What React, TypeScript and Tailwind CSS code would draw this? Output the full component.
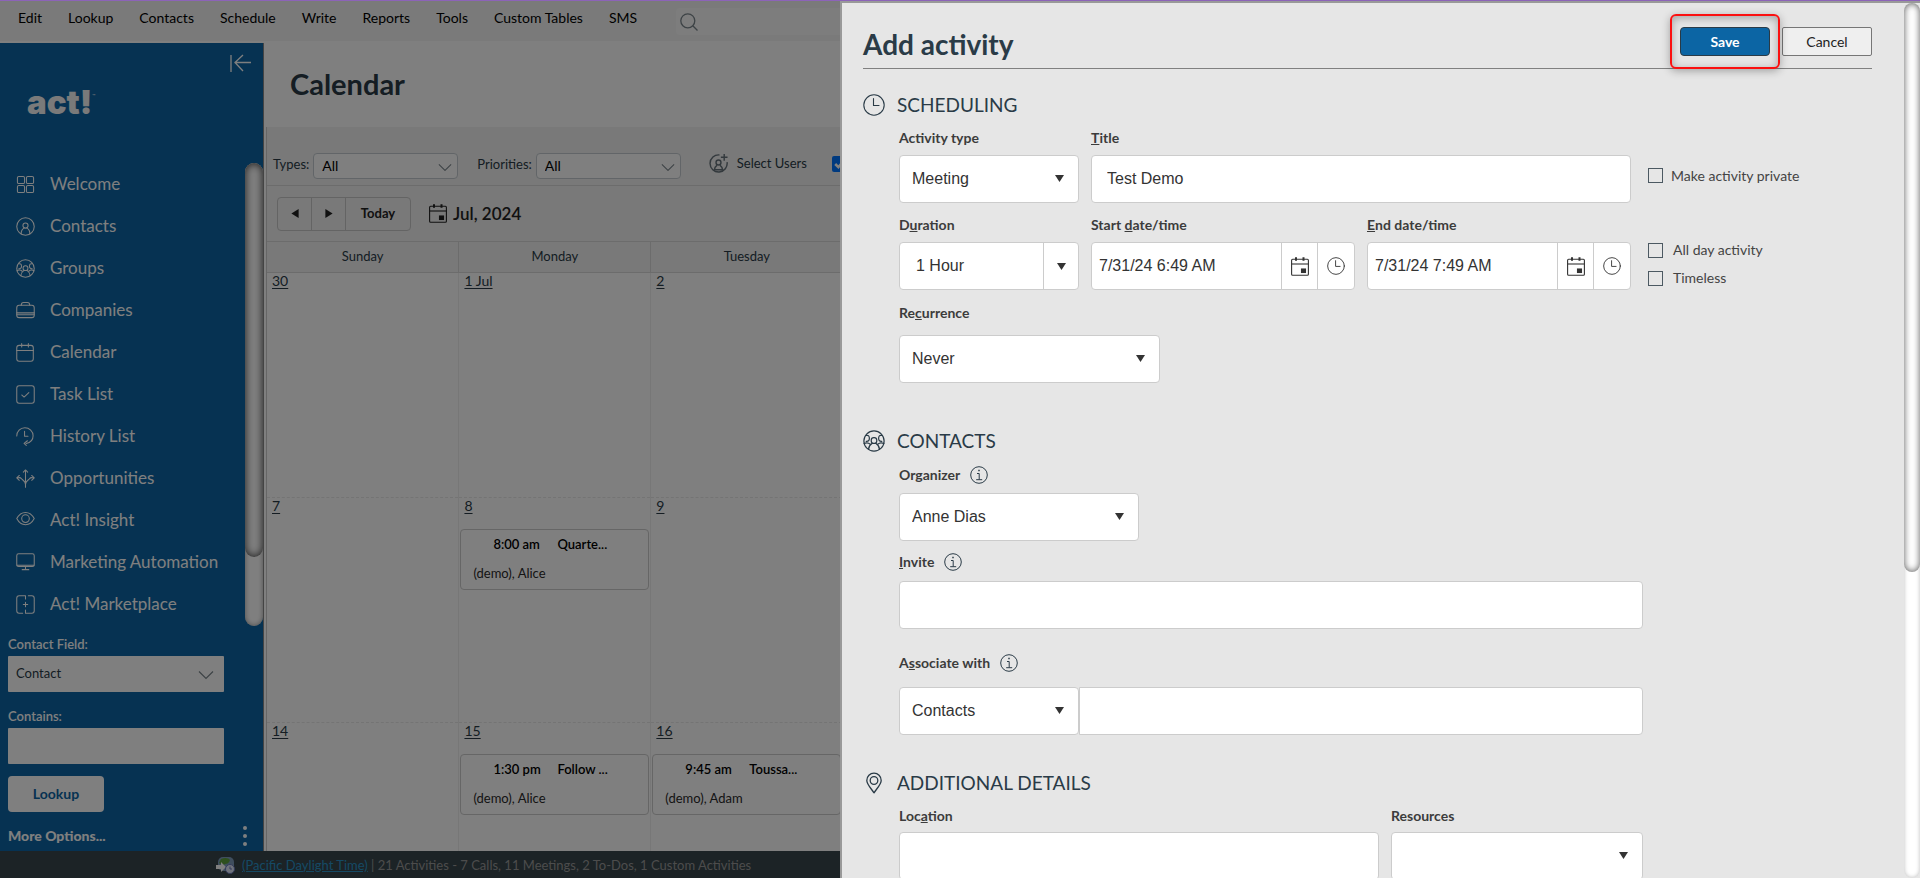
import React from "react";

type IconProps = { className?: string };

const stroke = {
  fill: "none",
  stroke: "currentColor",
  strokeWidth: 1.1,
  strokeLinecap: "round" as const,
  strokeLinejoin: "round" as const,
};

const WelcomeIcon = ({ className }: IconProps) => (
  <svg viewBox="0 0 20 20" className={className} {...stroke}>
    <rect x="1.5" y="1.5" width="7.5" height="7.5" rx="1.5" />
    <rect x="11" y="1.5" width="7.5" height="7.5" rx="1.5" />
    <rect x="1.5" y="11" width="7.5" height="7.5" rx="1.5" />
    <rect x="11" y="11" width="7.5" height="7.5" rx="1.5" />
  </svg>
);

const PersonIcon = ({ className }: IconProps) => (
  <svg viewBox="0 0 20 20" className={className} {...stroke}>
    <circle cx="10" cy="10" r="9.2" />
    <circle cx="10" cy="9" r="2.7" />
    <path d="M5.4 17.8c0-3.600 1.400-5.200 3.200-6.300M14.600 17.800c0-3.600-1.400-5.200-3.200-6.300" />
  </svg>
);

const GroupIcon = ({ className }: IconProps) => (
  <svg viewBox="0 0 20 20" className={className} {...stroke}>
    <circle cx="10" cy="10" r="9.2" />
    <rect x="7.500" y="7" width="5" height="5.200" rx="2.300" />
    <path d="M5 17.600c.2-2.600 1.400-4.300 3.400-5.600M15 17.600c-.2-2.600-1.400-4.300-3.400-5.600" />
    <path d="M3.200 5c1.600-.4 2.600.6 2.600 2.500 0 2-1 3-2.900 2.800M1 12.300c2-1 3.800-1 5.600.6" />
    <path d="M16.800 5c-1.600-.4-2.600.6-2.600 2.500 0 2 1 3 2.900 2.800M19 12.300c-2-1-3.800-1-5.600.6" />
  </svg>
);

const BriefcaseIcon = ({ className }: IconProps) => (
  <svg viewBox="0 0 20 20" className={className} {...stroke}>
    <rect x="0.8" y="4.5" width="18.4" height="13" rx="2.5" />
    <path d="M5.5 4.5c0-2 .8-3 2.5-3h4c1.700 0 2.500 1 2.500 3M.8 12.500h18.400M.8 14.500h18.400" />
  </svg>
);

const CalIcon = ({ className }: IconProps) => (
  <svg viewBox="0 0 20 20" className={className} {...stroke}>
    <rect x="0.800" y="2.500" width="17.400" height="16.700" rx="2.500" />
    <path d="M.8 8h17.400M6 .6v3.600M13 .6v3.600" />
  </svg>
);

const TaskIcon = ({ className }: IconProps) => (
  <svg viewBox="0 0 20 20" className={className} {...stroke}>
    <rect x="0.800" y="0.800" width="18.400" height="18.400" rx="2.500" />
    <path d="M6 10.500l2.500 2.200L13.500 8" />
  </svg>
);

const HistoryIcon = ({ className }: IconProps) => (
  <svg viewBox="0 0 20 20" className={className} {...stroke}>
    <path d="M.8 9.500C.8 4.500 4.500.8 9.300.8s8.700 3.700 8.700 8.400c0 4-2.800 7.200-7.300 8.200M9 4.500v5.200h3.600M12 14.500l-3.500 2.700 2.300 2.200" />
  </svg>
);

const OpportunityIcon = ({ className }: IconProps) => (
  <svg viewBox="0 0 20 20" className={className} {...stroke}>
    <path d="M10 19.200V1M7.700 3.300L10 1l2.300 2.300M3.500 6.800L.8 9.300l2.700 2.600M16.500 6.800l2.700 2.500-2.700 2.600M.8 9.300c3 0 3.500-1 5 1 1.500 2 4.200 2 4.200 6M19.200 9.300c-3 0-3.500-1-5 1-1.500 2-4.200 2-4.200 6" />
  </svg>
);

const EyeIcon = ({ className }: IconProps) => (
  <svg viewBox="0 0 20 20" className={className} {...stroke}>
    <path d="M.8 8C3 3.800 6 1.500 10 1.500S17 3.800 19.200 8c-2.200 4.200-5.200 6.500-9.200 6.500S3 12.200.8 8z" />
    <circle cx="10" cy="8" r="4" />
  </svg>
);

const MonitorIcon = ({ className }: IconProps) => (
  <svg viewBox="0 0 20 20" className={className} {...stroke}>
    <rect x="0.800" y="0.800" width="18.400" height="13.500" rx="2" />
    <path d="M1 13h18M10 14.500v3M6.500 17.500h7" />
  </svg>
);

const MarketIcon = ({ className }: IconProps) => (
  <svg viewBox="0 0 20 20" className={className} {...stroke}>
    <path d="M7 .8H3.300A2.500 2.500 0 0 0 .8 3.300v13.400a2.500 2.500 0 0 0 2.500 2.500H7M10 .8v3.500M10 15.700v3.500M13 .8h3.700a2.500 2.500 0 0 1 2.500 2.500v13.400a2.500 2.500 0 0 1-2.500 2.500H10M7 .8h3M7.700 10h4.600M10 7.700v4.600" />
  </svg>
);

const ClockIcon = ({ className }: IconProps) => (
  <svg viewBox="0 0 22 22" className={className} {...stroke}>
    <circle cx="11" cy="11" r="10.200" />
    <path d="M10.500 4.500v7h5.500" />
  </svg>
);

const DateIcon = ({ className }: IconProps) => (
  <svg viewBox="0 0 18 19" className={className} fill="none" stroke="currentColor" strokeWidth="1.100">
    <rect x="0.600" y="2.200" width="16.800" height="16" rx="1" />
    <path d="M.6 7h16.800" />
    <path d="M5 .3v3.500M12.500.3v3.500" strokeWidth="2" />
    <rect x="10.500" y="12" width="4" height="3.500" fill="currentColor" />
  </svg>
);

const InfoIcon = ({ className }: IconProps) => (
  <svg viewBox="0 0 18 18" className={className} fill="none" stroke="currentColor">
    <circle cx="9" cy="9" r="8.300" />
    <path d="M7 7.500h2.200v6M6.200 13.700h6" />
    <path d="M9 3.800v1.500" strokeWidth="1.500" />
  </svg>
);

const PinIcon = ({ className }: IconProps) => (
  <svg viewBox="0 0 22 22" className={className} {...stroke} strokeWidth="1.300">
    <path d="M11 20.800C8.500 17 3.800 12.300 3.800 8.500 3.800 4.300 7 1.200 11 1.200s7.200 3.100 7.200 7.300c0 3.800-4.700 8.500-7.200 12.300z" />
    <circle cx="11" cy="8.500" r="3.800" />
  </svg>
);

const Chevron = ({ className }: IconProps) => (
  <svg viewBox="0 0 16 10" className={className} fill="none" stroke="currentColor" strokeWidth="1.200">
    <path d="M1 1.500l7 7 7-7" />
  </svg>
);

const menu = ["Edit", "Lookup", "Contacts", "Schedule", "Write", "Reports", "Tools", "Custom Tables", "SMS"];

const nav = [
  { label: "Welcome", Icon: WelcomeIcon },
  { label: "Contacts", Icon: PersonIcon },
  { label: "Groups", Icon: GroupIcon },
  { label: "Companies", Icon: BriefcaseIcon },
  { label: "Calendar", Icon: CalIcon },
  { label: "Task List", Icon: TaskIcon },
  { label: "History List", Icon: HistoryIcon },
  { label: "Opportunities", Icon: OpportunityIcon },
  { label: "Act! Insight", Icon: EyeIcon },
  { label: "Marketing Automation", Icon: MonitorIcon },
  { label: "Act! Marketplace", Icon: MarketIcon },
];

const weekdays = ["Sunday", "Monday", "Tuesday", "Wednesday", "Thursday", "Friday", "Saturday"];

type CalEvent = { time: string; title: string; who: string };

const weeks: { day: string; event?: CalEvent }[][] = [
  [{ day: "30" }, { day: "1 Jul" }, { day: "2" }, { day: "3" }, { day: "4" }, { day: "5" }, { day: "6" }],
  [
    { day: "7" },
    { day: "8", event: { time: "8:00 am", title: "Quarte...", who: "(demo), Alice" } },
    { day: "9" },
    { day: "10" },
    { day: "11" },
    { day: "12" },
    { day: "13" },
  ],
  [
    { day: "14" },
    { day: "15", event: { time: "1:30 pm", title: "Follow ...", who: "(demo), Alice" } },
    { day: "16", event: { time: "9:45 am", title: "Toussa...", who: "(demo), Adam" } },
    { day: "17" },
    { day: "18" },
    { day: "19" },
    { day: "20" },
  ],
];

const TopMenu = () => (
  <header className="flex h-[43px] shrink-0 items-start border-b-2 border-white bg-[#f4f4f4] pl-[18px] text-sm text-black">
    <nav className="flex gap-[26px] pt-2">
      {menu.map((item) => (
        <a key={item} href="#" className="whitespace-nowrap leading-5">
          {item}
        </a>
      ))}
    </nav>
    <label className="ml-[39px] mt-2 flex h-[27px] w-[330px] items-center rounded bg-[#fafafa] pl-1">
      <svg viewBox="0 0 18 18" className="size-[18px] text-[#7b868c]" fill="none" stroke="currentColor" strokeWidth="1.300">
        <circle cx="7.800" cy="7.800" r="7" />
        <path d="M12.800 12.800l4.700 4.700" />
      </svg>
      <input aria-label="Search" className="min-w-0 flex-1 outline-none" />
    </label>
  </header>
);

const Sidebar = () => (
  <aside className="flex w-[264px] shrink-0 flex-col border-r border-[#888] bg-[#0c65a4] text-white">
    <div className="flex justify-end pr-3 pt-[11px]">
      <button aria-label="Collapse menu">
        <svg viewBox="0 0 21 18" className="h-[18px] w-[21px]" fill="none" stroke="currentColor" strokeWidth="1.300">
          <path d="M1 1v17M21 8.500H4.500M13 1L5 8.500l8 8.500" />
        </svg>
      </button>
    </div>
    <div className="flex h-[89px] items-start pl-[27px] pt-[10px] font-[Inter] text-[#f4f4f4]">
      <span className="text-[33px] leading-[40px] font-black">act!</span>
      <span className="pt-2 text-[5px] leading-3">™</span>
    </div>
    <div className="flex">
      <nav className="flex flex-1 flex-col pt-[2px]">
        {nav.map(({ label, Icon }) => (
          <a key={label} href="#" className="flex h-[42px] items-center gap-[15px] pl-4 text-[17px]">
            <Icon className="size-[19px]" />
            {label}
          </a>
        ))}
      </nav>
      <div className="mb-[-1px] mt-[2px] w-[18px] rounded-full bg-white shadow-[inset_0_0_5px_#999]">
        <div className="h-[85%] rounded-full bg-white shadow-[inset_0_0_8px_#333]" />
      </div>
    </div>
    <form className="flex flex-col items-start pl-2 pt-[9px] text-[13px]">
      <label htmlFor="field" className="leading-5 font-semibold">
        Contact Field:
      </label>
      <div className="relative mt-[2px] w-[216px]">
        <select id="field" className="h-9 w-full appearance-none rounded-[1px] bg-white px-2 text-[#2a3b47]">
          <option>Contact</option>
        </select>
        <Chevron className="pointer-events-none absolute right-[10px] top-[14px] w-4 text-[#7b868c]" />
      </div>
      <label htmlFor="contains" className="mt-[14px] leading-5 font-semibold">
        Contains:
      </label>
      <input id="contains" className="mt-[2px] h-9 w-[216px] rounded-[1px] bg-white px-2 text-black" />
      <button type="button" className="mt-3 h-9 w-24 rounded bg-white text-sm font-bold text-[#0c65a4]">
        Lookup
      </button>
    </form>
    <div className="flex items-center justify-between pl-2 pr-4 pt-[14px]">
      <a href="#" className="text-sm font-black">
        More Options...
      </a>
      <button aria-label="More" className="flex flex-col gap-1">
        <span className="size-1 rounded-full bg-white" />
        <span className="size-1 rounded-full bg-white" />
        <span className="size-1 rounded-full bg-white" />
      </button>
    </div>
  </aside>
);

const FilterSelect = ({ label }: { label: string }) => (
  <label className="flex items-center gap-1">
    <span className="leading-5">{label}</span>
    <span className="relative mt-1 w-[145px]">
      <select className="h-[26px] w-full appearance-none rounded border border-[#c4cbd0] bg-white pl-2 text-sm text-black">
        <option>All</option>
      </select>
      <Chevron className="pointer-events-none absolute right-[6px] top-[10px] w-[14px] text-[#7b868c]" />
    </span>
  </label>
);

const CalendarPage = () => (
  <main className="min-w-0 flex-1 overflow-hidden bg-white pl-[2px] text-[13px] text-[#2a3b47]">
    <h1 className="flex h-[84px] items-center pb-[2px] pl-6 text-[29px] font-bold">Calendar</h1>
    <div className="border-l border-[#ccc] bg-[#f2f2f2] pr-[309px]">
      <div className="flex h-[59px] items-center gap-[19px] border-b border-[#d8d8d8] pl-[6px] pt-[15px]">
        <FilterSelect label="Types:" />
        <FilterSelect label="Priorities:" />
        <button className="ml-[9px] flex items-center gap-[9px]">
          <svg viewBox="0 0 20 20" className="size-[19px] text-[#66727a]" fill="none" stroke="currentColor" strokeWidth="1.500">
            <path d="M11 1A9 9 0 1 0 19 8.500M16 0v7M12.500 3.500h7" />
            <circle cx="10" cy="9" r="2.600" />
            <path d="M5.500 17.500c.3-3.200 1.500-4.800 3-5.800M14.500 17.500c-.3-3.200-1.500-4.800-3-5.800M6 16.500h8" />
          </svg>
          Select Users
        </button>
        <label className="ml-[6px] flex items-center gap-2">
          <input type="checkbox" defaultChecked className="size-4 accent-[#0075ff]" />
          Show Cleared
        </label>
      </div>
      <div className="flex h-14 items-center border-b border-[#d8d8d8] pl-[10px]">
        <div className="flex h-[34px] divide-x divide-[#c8c8c8] rounded border border-[#c8c8c8] font-bold text-[#222]">
          <button aria-label="Previous" className="w-[34px]">
            <svg viewBox="0 0 8 10" className="mx-auto h-[9px] w-2" fill="currentColor">
              <path d="M8 0v10L0 5z" />
            </svg>
          </button>
          <button aria-label="Next" className="w-[34px]">
            <svg viewBox="0 0 8 10" className="mx-auto h-[9px] w-2" fill="currentColor">
              <path d="M0 0v10l8-5z" />
            </svg>
          </button>
          <button className="w-16">Today</button>
        </div>
        <DateIcon className="ml-[18px] h-[19px] w-[18px] text-[#222]" />
        <span className="ml-[6px] text-[17px] font-semibold text-[#222]">Jul, 2024</span>
      </div>
      <table className="w-full table-fixed border-collapse">
        <thead>
          <tr className="h-[30px]">
            {weekdays.map((d) => (
              <th key={d} className="border-r border-b border-[#d8d8d8] font-normal">
                {d}
              </th>
            ))}
          </tr>
        </thead>
        <tbody className="bg-white">
          {weeks.map((week, i) => (
            <tr key={i} className="h-[225px] border-b border-dashed border-[#e8e8e8]">
              {week.map(({ day, event }) => (
                <td key={day} className="border-r border-[#eee] px-[1px] align-top">
                  <a href="#" className="block pl-1 text-sm leading-4 underline underline-offset-2">
                    {day}
                  </a>
                  {event && (
                    <div className="mt-[15px] h-[61px] rounded border border-[#ccc] pl-3 leading-[29px] text-black">
                      <div className="flex pl-5">
                        <span className="w-16 font-semibold">{event.time}</span>
                        <span className="font-semibold">{event.title}</span>
                      </div>
                      <div className="text-[#2a2a2a]">{event.who}</div>
                    </div>
                  )}
                </td>
              ))}
            </tr>
          ))}
        </tbody>
      </table>
    </div>
  </main>
);

const StatusBar = () => (
  <footer className="flex h-[27px] shrink-0 items-center gap-[7px] bg-[#38464c] pl-[216px] pt-[2px] text-[13px] text-[#999]">
    <svg viewBox="0 0 19 17" className="h-[17px] w-[19px]">
      <rect x="2" width="16" height="14" rx="5" fill="#7e9cbc" />
      <path d="M5 2c4-2 8-1 9 1-1 3-3 4-5 4-2 2-4 0-6-1z" fill="#5ca03c" />
      <path d="M0 8h5V5l5 5-5 5v-3H0z" fill="#fff" />
      <circle cx="14" cy="12" r="4.500" fill="#dfe6f8" stroke="#6878b8" />
      <path d="M14 9.500V12h2" stroke="#6878b8" fill="none" />
    </svg>
    <span>
      <a href="#" className="text-[#2a93c9] underline">
        (Pacific Daylight Time)
      </a>{" "}
      | 21 Activities - 7 Calls, 11 Meetings, 2 To-Dos, 1 Custom Activities
    </span>
  </footer>
);

const Arrow = ({ className = "right-[15px]" }: IconProps) => (
  <svg viewBox="0 0 9 7" className={`pointer-events-none absolute top-5 h-[7px] w-[9px] text-[#333] ${className}`} fill="currentColor">
    <path d="M0 0h9L4.500 7z" />
  </svg>
);

const box = "h-12 rounded border border-[#ccc] bg-white font-['Liberation_Sans',Arial,sans-serif] text-base text-[#333]";
const labelText = "flex items-center text-sm leading-5 font-bold text-[#3c3c3c]";

const SelectBox = ({ id, value, className }: { id: string; value: string; className: string }) => (
  <div className={`relative ${className}`}>
    <select id={id} className={`${box} w-full appearance-none pl-3`}>
      <option>{value}</option>
    </select>
    <Arrow />
  </div>
);

const DateBox = ({ id, value }: { id: string; value: string }) => (
  <div className={`${box} flex divide-x divide-[#ccc]`}>
    <input id={id} defaultValue={value} className="min-w-0 flex-1 pl-[7px] outline-none" />
    <button aria-label="Pick a date" className="flex w-9 items-center justify-center">
      <DateIcon className="h-[19px] w-[18px]" />
    </button>
    <button aria-label="Pick a time" className="flex w-9 items-center justify-center">
      <ClockIcon className="size-[18px]" />
    </button>
  </div>
);

const CheckBox = ({ label, className }: { label: string; className: string }) => (
  <label className={`flex items-center text-sm leading-5 text-[#444] ${className}`}>
    <input type="checkbox" className="size-[15px] appearance-none border border-[#4c5962]" />
    {label}
  </label>
);

const SectionTitle = ({ icon, children }: { icon: React.ReactNode; children: React.ReactNode }) => (
  <h3 className="flex h-8 items-center gap-3 text-[19px] text-[#2a3b47]">
    {icon}
    {children}
  </h3>
);

const AddActivity = () => (
  <section
    role="dialog"
    aria-label="Add activity"
    className="fixed bottom-0 right-0 top-px flex w-9/16 overflow-hidden border-l-2 border-t-2 border-[#999] bg-[#e6e6e6]"
  >
    <div className="min-w-0 flex-1 pl-[21px] pr-8">
      <div className="flex items-start justify-between border-b border-[#808080] pb-[7px] pt-6">
        <h2 className="text-[28px] leading-[34px] font-bold text-[#2a3b47]">Add activity</h2>
        <div className="flex gap-3 text-sm">
          <div className="relative">
            <button className="h-[29px] w-[90px] rounded border border-[#2a3b47] bg-[#0c65a4] font-bold text-white">Save</button>
            <div className="pointer-events-none absolute -inset-x-[10px] -bottom-[13px] -top-[13px] rounded-md border-2 border-[#fb1010] shadow-[0_2px_8px_rgba(0,0,0,0.3),inset_0_2px_8px_rgba(0,0,0,0.3)]" />
          </div>
          <button className="h-[29px] w-[90px] rounded-xs border border-[#767676] bg-[#efefef] text-[#222]">Cancel</button>
        </div>
      </div>

      <div className="mt-5">
        <SectionTitle icon={<ClockIcon className="size-[22px]" />}>SCHEDULING</SectionTitle>
        <div className="mt-[7px] grid grid-cols-[180px_264px_264px_1fr] gap-x-3 pl-9">
          <label htmlFor="type" className={labelText}>
            Activity type
          </label>
          <label htmlFor="title" className={`${labelText} col-span-3`}>
            <u>T</u>itle
          </label>
          <SelectBox id="type" value="Meeting" className="mt-[7px]" />
          <input id="title" defaultValue="Test Demo" className={`${box} col-span-2 mt-[7px] px-[15px]`} />
          <CheckBox label="Make activity private" className="gap-2 pl-[5px]" />

          <label htmlFor="duration" className={`${labelText} mt-3`}>
            <span>
              D<u>u</u>ration
            </span>
          </label>
          <label htmlFor="start" className={`${labelText} mt-3`}>
            <span>
              Start <u>d</u>ate/time
            </span>
          </label>
          <label htmlFor="end" className={`${labelText} col-span-2 mt-3`}>
            <u>E</u>nd date/time
          </label>
          <div className={`${box} relative mt-[7px] flex`}>
            <input id="duration" defaultValue="1 Hour" className="min-w-0 flex-1 pl-4 outline-none" />
            <button aria-label="Choose duration" className="w-[35px] border-l border-[#ccc]">
              <Arrow className="right-[12px]" />
            </button>
          </div>
          <div className="mt-[7px]">
            <DateBox id="start" value="7/31/24 6:49 AM" />
          </div>
          <div className="mt-[7px]">
            <DateBox id="end" value="7/31/24 7:49 AM" />
          </div>
          <div className="mt-[5px] flex flex-col gap-2 pl-[5px]">
            <CheckBox label="All day activity" className="gap-[10px]" />
            <CheckBox label="Timeless" className="gap-[10px]" />
          </div>
        </div>
        <div className="mt-[13px] pl-9">
          <label htmlFor="recurrence" className={labelText}>
            <span>
              Re<u>c</u>urrence
            </span>
          </label>
          <SelectBox id="recurrence" value="Never" className="mt-3 w-[261px]" />
        </div>
      </div>

      <div className="mt-[42px]">
        <SectionTitle icon={<GroupIcon className="size-[22px]" />}>CONTACTS</SectionTitle>
        <div className="mt-2 flex max-w-[780px] flex-col pl-9">
          <div className={`${labelText} gap-[10px]`}>
            <label htmlFor="organizer">Organizer</label>
            <InfoIcon className="size-[18px] text-[#2a3b47]" />
          </div>
          <SelectBox id="organizer" value="Anne Dias" className="mt-2 w-60" />
          <div className={`${labelText} mt-[11px] gap-[10px]`}>
            <label htmlFor="invite">
              <u>I</u>nvite
            </label>
            <InfoIcon className="size-[18px] text-[#2a3b47]" />
          </div>
          <input id="invite" className={`${box} mt-[9px] px-3`} />
          <div className={`${labelText} mt-6 gap-[10px]`}>
            <label htmlFor="associate">
              A<u>s</u>sociate with
            </label>
            <InfoIcon className="size-[18px] text-[#2a3b47]" />
          </div>
          <div className="mt-[14px] flex">
            <SelectBox id="associate" value="Contacts" className="w-[180px]" />
            <input aria-label="Associated contacts" className={`${box} min-w-0 flex-1 rounded-l-none px-3`} />
          </div>
        </div>
      </div>

      <div className="mt-8">
        <SectionTitle icon={<PinIcon className="size-[22px]" />}>ADDITIONAL DETAILS</SectionTitle>
        <div className="mt-[7px] flex max-w-[780px] gap-3 pl-9">
          <div className="flex min-w-0 flex-1 flex-col gap-[6px]">
            <label htmlFor="location" className={labelText}>
              <span>
                Loc<u>a</u>tion
              </span>
            </label>
            <input id="location" className={`${box} px-3`} />
          </div>
          <div className="flex w-[252px] flex-col gap-[6px]">
            <label htmlFor="resources" className={labelText}>
              Resources
            </label>
            <SelectBox id="resources" value="" className="" />
          </div>
        </div>
      </div>
    </div>
    <div className="w-4 shrink-0 rounded-full bg-white shadow-[inset_0_0_4px_#bbb]">
      <div className="h-[65%] rounded-full bg-white shadow-[inset_0_0_7px_#555]" />
    </div>
  </section>
);

const App = () => {
  return (
    <div className="flex h-screen flex-col overflow-hidden bg-white font-[Lato,sans-serif]">
      <TopMenu />
      <div className="flex min-h-0 flex-1">
        <Sidebar />
        <CalendarPage />
      </div>
      <StatusBar />
      <div className="fixed inset-0 bg-black/50" />
      <AddActivity />
      <div className="fixed inset-x-0 top-0 h-px bg-[#8c63b8]" />
    </div>
  );
};

export default App;
